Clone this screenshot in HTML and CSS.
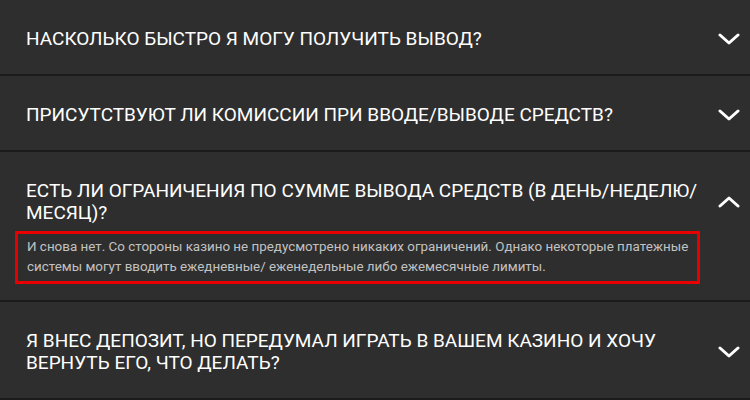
FILE: index.html
```html
<!DOCTYPE html>
<html lang="ru">
<head>
<meta charset="utf-8">
<link rel="stylesheet" href="styles.css">
</head>
<body>
<div class="faq">
  <div class="item">
    <div class="head">
      <div class="title">НАСКОЛЬКО БЫСТРО Я МОГУ ПОЛУЧИТЬ ВЫВОД?</div>
      <svg class="chev" viewBox="0 0 22 12" width="22" height="12"><polyline points="2,2 11,10 20,2"/></svg>
    </div>
  </div>
  <div class="item">
    <div class="head">
      <div class="title">ПРИСУТСТВУЮТ ЛИ КОМИССИИ ПРИ ВВОДЕ/ВЫВОДЕ СРЕДСТВ?</div>
      <svg class="chev" viewBox="0 0 22 12" width="22" height="12"><polyline points="2,2 11,10 20,2"/></svg>
    </div>
  </div>
  <div class="item open">
    <div class="head">
      <div class="title">ЕСТЬ ЛИ ОГРАНИЧЕНИЯ ПО СУММЕ ВЫВОДА СРЕДСТВ (В ДЕНЬ/НЕДЕЛЮ/ МЕСЯЦ)?</div>
      <svg class="chev" viewBox="0 0 22 12" width="22" height="12"><polyline points="2,10 11,2 20,10"/></svg>
    </div>
    <div class="answer">И снова нет. Со стороны казино не предусмотрено никаких ограничений. Однако некоторые платежные системы могут вводить ежедневные/ еженедельные либо ежемесячные лимиты.</div>
  </div>
  <div class="item">
    <div class="head">
      <div class="title">Я ВНЕС ДЕПОЗИТ, НО ПЕРЕДУМАЛ ИГРАТЬ В ВАШЕМ КАЗИНО И ХОЧУ ВЕРНУТЬ ЕГО, ЧТО ДЕЛАТЬ?</div>
      <svg class="chev" viewBox="0 0 22 12" width="22" height="12"><polyline points="2,2 11,10 20,2"/></svg>
    </div>
  </div>
</div>
</body>
</html>
```

FILE: styles.css
```css
html, body {
  margin: 0;
  padding: 0;
  background: #2e2e2e;
}
body {
  font-family: Roboto, "Noto Sans", sans-serif;
  width: 750px;
  height: 400px;
  overflow: hidden;
}
.faq {
  display: flex;
  flex-direction: column;
}
.item {
  border-bottom: 2px solid #1b1b1b;
  padding: 28px 0 24px 0;
}
.item.open {
  padding-bottom: 16px;
}
.head {
  display: flex;
  align-items: center;
  padding: 0 10px 0 26px;
}
.title {
  flex: 1;
  color: #ffffff;
  font-size: 19px;
  line-height: 22px;
  padding-right: 15px;
}
.chev {
  flex: none;
  fill: none;
  stroke: #ffffff;
  stroke-width: 3;
  stroke-linecap: round;
  stroke-linejoin: round;
}
.answer {
  margin: 7px 0 0 15px;
  width: 664px;
  border: 3px solid #e80000;
  padding: 3px 6px 4px 9px;
  color: #c2c2c2;
  font-size: 13.4px;
  line-height: 20px;
}
```
